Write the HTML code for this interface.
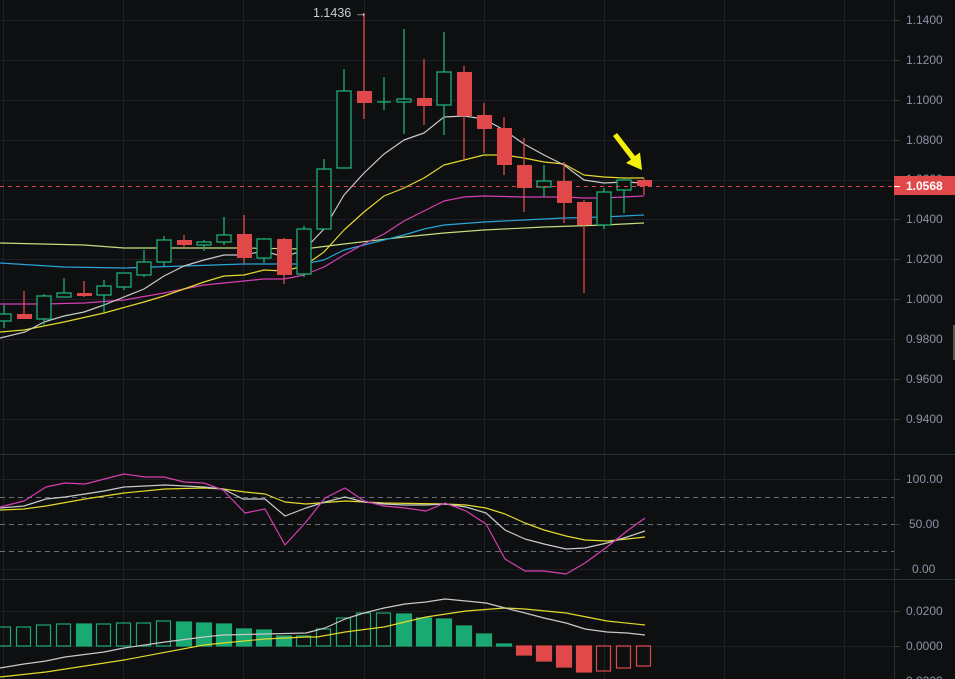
<!DOCTYPE html>
<html><head><meta charset="utf-8"><style>
html,body{margin:0;padding:0;background:#0e0f11;}
svg{display:block;font-family:"Liberation Sans",sans-serif;}
</style></head><body>
<svg width="955" height="679" viewBox="0 0 955 679" xmlns="http://www.w3.org/2000/svg">
<rect width="955" height="679" fill="#0e0f11"/>
<g stroke="#1e2025" stroke-width="1">
<line x1="0" y1="20.5" x2="894" y2="20.5"/><line x1="0" y1="60.5" x2="894" y2="60.5"/><line x1="0" y1="100.5" x2="894" y2="100.5"/><line x1="0" y1="140.5" x2="894" y2="140.5"/><line x1="0" y1="180.5" x2="894" y2="180.5"/><line x1="0" y1="219.5" x2="894" y2="219.5"/><line x1="0" y1="259.5" x2="894" y2="259.5"/><line x1="0" y1="299.5" x2="894" y2="299.5"/><line x1="0" y1="339.5" x2="894" y2="339.5"/><line x1="0" y1="379.5" x2="894" y2="379.5"/><line x1="0" y1="419.5" x2="894" y2="419.5"/>
<line x1="0" y1="479.5" x2="894" y2="479.5"/><line x1="0" y1="569.5" x2="894" y2="569.5"/>
<line x1="0" y1="611.5" x2="894" y2="611.5"/><line x1="0" y1="646.5" x2="894" y2="646.5"/>
<line x1="3.5" y1="0" x2="3.5" y2="679"/><line x1="123.5" y1="0" x2="123.5" y2="679"/><line x1="243.5" y1="0" x2="243.5" y2="679"/><line x1="364.5" y1="0" x2="364.5" y2="679"/><line x1="484.5" y1="0" x2="484.5" y2="679"/><line x1="604.5" y1="0" x2="604.5" y2="679"/><line x1="724.5" y1="0" x2="724.5" y2="679"/><line x1="844.5" y1="0" x2="844.5" y2="679"/>
</g>
<g stroke="#2a2d33" stroke-width="1">
<line x1="0" y1="454.5" x2="955" y2="454.5"/><line x1="0" y1="579.5" x2="955" y2="579.5"/><line x1="894.5" y1="0" x2="894.5" y2="679"/>
</g>
<g stroke="#3a3d44" stroke-width="1">
<line x1="894" y1="20.5" x2="900" y2="20.5"/><line x1="894" y1="60.5" x2="900" y2="60.5"/><line x1="894" y1="100.5" x2="900" y2="100.5"/><line x1="894" y1="140.5" x2="900" y2="140.5"/><line x1="894" y1="219.5" x2="900" y2="219.5"/><line x1="894" y1="259.5" x2="900" y2="259.5"/><line x1="894" y1="299.5" x2="900" y2="299.5"/><line x1="894" y1="379.5" x2="900" y2="379.5"/><line x1="894" y1="419.5" x2="900" y2="419.5"/><line x1="894" y1="479.5" x2="900" y2="479.5"/><line x1="894" y1="524.5" x2="900" y2="524.5"/><line x1="894" y1="569.5" x2="900" y2="569.5"/><line x1="894" y1="611.5" x2="900" y2="611.5"/><line x1="894" y1="646.5" x2="900" y2="646.5"/>
</g>
<g stroke="#6b6e75" stroke-width="1" stroke-dasharray="5,4">
<line x1="0" y1="497.5" x2="894" y2="497.5"/><line x1="0" y1="524.5" x2="894" y2="524.5"/><line x1="0" y1="551.5" x2="894" y2="551.5"/>
</g>
<g fill="none" stroke-width="1.2" stroke-linejoin="round">
<polyline stroke="#c5dd7f" points="0,243 84,245 124,248 244,248 304,249 344,244 404,237 444,233 484,230 544,227 604,225 644,223"/>
<polyline stroke="#2aa3d8" points="0,263 64,267 124,268 184,266 244,264 304,264 324,260 344,250 364,245 384,240 404,235 424,229 444,225 484,222 524,220 564,218 604,217 644,215"/>
<polyline stroke="#d63fb3" points="0,304 44,304 84,303 124,300 164,293 204,285 244,281 264,279 284,279 304,275 324,267 344,255 364,244 384,234 404,221 424,211 444,201 464,197 484,196 524,197 564,197 584,198 604,198 644,196"/>
<polyline stroke="#e2d92a" points="0,332 24,330 64,322 104,313 144,302 164,296 184,289 204,282 224,276 244,275 264,270 284,271 304,266 324,252 344,230 364,212 384,196 404,188 424,178 444,165 464,160 484,155 504,155 524,158 544,162 564,164 584,175 604,177 624,178 644,178"/>
<polyline stroke="#c9c9c9" points="0,338 25,332 44,322 64,316 84,312 104,305 144,289 164,276 184,266 204,260 224,255 244,255 264,251 284,257 304,250 324,229 344,195 364,173 384,154 404,140 424,133 444,117 464,116 484,119 504,130 524,144 544,155 564,165 584,180 604,183 624,182 644,183"/>
</g>
<g stroke="#1fae74" stroke-width="1.3" fill="#0e0f11">
<line x1="4" y1="305" x2="4" y2="328"/><rect x="-3" y="314" width="14" height="7"/>
<line x1="44" y1="294" x2="44" y2="325"/><rect x="37" y="296" width="14" height="23"/>
<line x1="64" y1="278" x2="64" y2="297"/><rect x="57" y="293" width="14" height="4"/>
<line x1="104" y1="280" x2="104" y2="312"/><rect x="97" y="286" width="14" height="9"/>
<line x1="124" y1="273" x2="124" y2="290"/><rect x="117" y="273" width="14" height="14"/>
<line x1="144" y1="250" x2="144" y2="277"/><rect x="137" y="262" width="14" height="13"/>
<line x1="164" y1="236" x2="164" y2="266"/><rect x="157" y="240" width="14" height="22"/>
<line x1="204" y1="240" x2="204" y2="251"/><rect x="197" y="242" width="14" height="3"/>
<line x1="224" y1="217" x2="224" y2="245"/><rect x="217" y="235" width="14" height="7"/>
<line x1="264" y1="238" x2="264" y2="263"/><rect x="257" y="239" width="14" height="19"/>
<line x1="304" y1="226" x2="304" y2="277"/><rect x="297" y="229" width="14" height="45"/>
<line x1="324" y1="159" x2="324" y2="229"/><rect x="317" y="169" width="14" height="60"/>
<line x1="344" y1="69" x2="344" y2="168"/><rect x="337" y="91" width="14" height="77"/>
<line x1="384" y1="77" x2="384" y2="110"/><line x1="377" y1="102" x2="391" y2="102"/>
<line x1="404" y1="29" x2="404" y2="134"/><rect x="397" y="99" width="14" height="3"/>
<line x1="444" y1="32" x2="444" y2="135"/><rect x="437" y="72" width="14" height="33"/>
<line x1="544" y1="165" x2="544" y2="197"/><rect x="537" y="181" width="14" height="6"/>
<line x1="604" y1="188" x2="604" y2="229"/><rect x="597" y="192" width="14" height="33"/>
<line x1="624" y1="179" x2="624" y2="213"/><rect x="617" y="180" width="14" height="10"/>
</g>
<g fill="#e0484a" stroke="#e0484a" stroke-width="1.3">
<line x1="24" y1="291" x2="24" y2="319"/><rect x="17" y="314" width="15" height="5" stroke="none"/>
<line x1="84" y1="281" x2="84" y2="297"/><rect x="77" y="293" width="15" height="3" stroke="none"/>
<line x1="184" y1="235" x2="184" y2="248"/><rect x="177" y="240" width="15" height="5" stroke="none"/>
<line x1="244" y1="215" x2="244" y2="263"/><rect x="237" y="234" width="15" height="24" stroke="none"/>
<line x1="284" y1="238" x2="284" y2="284"/><rect x="277" y="239" width="15" height="36" stroke="none"/>
<line x1="364" y1="13" x2="364" y2="119"/><rect x="357" y="91" width="15" height="12" stroke="none"/>
<line x1="424" y1="59" x2="424" y2="125"/><rect x="417" y="98" width="15" height="8" stroke="none"/>
<line x1="464" y1="66" x2="464" y2="161"/><rect x="457" y="72" width="15" height="44" stroke="none"/>
<line x1="484" y1="103" x2="484" y2="153"/><rect x="477" y="115" width="15" height="14" stroke="none"/>
<line x1="504" y1="117" x2="504" y2="175"/><rect x="497" y="128" width="15" height="37" stroke="none"/>
<line x1="524" y1="138" x2="524" y2="212"/><rect x="517" y="165" width="15" height="23" stroke="none"/>
<line x1="564" y1="162" x2="564" y2="223"/><rect x="557" y="181" width="15" height="22" stroke="none"/>
<line x1="584" y1="200" x2="584" y2="293"/><rect x="577" y="202" width="15" height="23" stroke="none"/>
<line x1="644" y1="178" x2="644" y2="195"/><rect x="637" y="180" width="15" height="6" stroke="none"/>
</g>
<line x1="0" y1="186.5" x2="894" y2="186.5" stroke="#e0484a" stroke-width="1" stroke-dasharray="4,4"/>
<polygon points="617,133 635,156 640,152.5 642,170 626,163 631,159.5 613,136" fill="#f5f20a"/>
<text x="313" y="17" font-size="12.5" fill="#c8ccd4">1.1436 →</text>
<g font-size="12" fill="#8b93a5">
<text x="906" y="24">1.1400</text><text x="906" y="64">1.1200</text><text x="906" y="104">1.1000</text><text x="906" y="144">1.0800</text><text x="906" y="183">1.0600</text><text x="906" y="223">1.0400</text><text x="906" y="263">1.0200</text><text x="906" y="303">1.0000</text><text x="906" y="343">0.9800</text><text x="906" y="383">0.9600</text><text x="906" y="423">0.9400</text>
<text x="906" y="483">100.00</text><text x="909" y="528">50.00</text><text x="912" y="573">0.00</text>
<text x="906" y="615">0.0200</text><text x="906" y="650">0.0000</text><text x="906" y="685">0.0200</text>
</g>
<rect x="894" y="176" width="61" height="19" fill="#e0484a"/>
<line x1="894" y1="186.5" x2="900" y2="186.5" stroke="#fff"/>
<text x="906" y="190" font-size="12" font-weight="bold" fill="#ffffff">1.0568</text>
<rect x="953" y="325" width="2" height="35" fill="#555"/>
<g fill="none" stroke-width="1.2" stroke-linejoin="round">
<polyline stroke="#e2d92a" points="0,510 24,509 46,506 85,499 124,493 165,489 204,488 223,489 245,492 265,494 285,502 306,504 345,501 384,503 445,504 466,505 486,508 505,514 525,523 544,530 566,536 585,540 607,541 627,539 645,537"/>
<polyline stroke="#c9c9c9" points="0,508 24,506 46,499 65,497 85,494 104,491 124,487 165,485 204,487 223,489 243,499 265,499 285,516 306,508 325,502 345,497 364,502 384,504 405,505 426,505 445,504 466,507 486,513 505,530 525,539 544,544 566,549 585,548 607,543 627,537 645,531"/>
<polyline stroke="#d63fb3" points="0,507 24,501 46,487 65,483 85,484 124,474 145,477 164,477 184,482 204,483 223,490 245,513 265,509 285,545 306,522 325,498 345,488 364,501 384,506 405,508 426,511 445,503 466,511 486,524 505,559 525,571 544,571 566,574 585,563 607,547 627,531 645,518"/>
</g>
<g fill="#1aa873" stroke="#1aa873" stroke-width="1.2">
<rect x="-3.5" y="627" width="14" height="19" fill="none"/>
<rect x="16.5" y="627" width="14" height="19" fill="none"/>
<rect x="36.5" y="625" width="14" height="21" fill="none"/>
<rect x="56.5" y="624" width="14" height="22" fill="none"/>
<rect x="76.5" y="624" width="15" height="22"/>
<rect x="96.5" y="624" width="14" height="22" fill="none"/>
<rect x="116.5" y="623" width="14" height="23" fill="none"/>
<rect x="136.5" y="623" width="14" height="23" fill="none"/>
<rect x="156.5" y="621" width="14" height="25" fill="none"/>
<rect x="176.5" y="622" width="15" height="24"/>
<rect x="196.5" y="623" width="15" height="23"/>
<rect x="216.5" y="624" width="15" height="22"/>
<rect x="236.5" y="629" width="15" height="17"/>
<rect x="256.5" y="630" width="15" height="16"/>
<rect x="276.5" y="636" width="15" height="10"/>
<rect x="296.5" y="636" width="14" height="10" fill="none"/>
<rect x="316.5" y="629" width="14" height="17" fill="none"/>
<rect x="336.5" y="618" width="14" height="28" fill="none"/>
<rect x="356.5" y="613" width="14" height="33" fill="none"/>
<rect x="376.5" y="613" width="14" height="33" fill="none"/>
<rect x="396.5" y="614" width="15" height="32"/>
<rect x="416.5" y="618" width="15" height="28"/>
<rect x="436.5" y="619" width="15" height="27"/>
<rect x="456.5" y="626" width="15" height="20"/>
<rect x="476.5" y="634" width="15" height="12"/>
<rect x="496.5" y="644" width="15" height="2"/>
</g>
<g fill="#e0484a" stroke="#e0484a" stroke-width="1.2">
<rect x="516.5" y="646" width="15" height="9"/>
<rect x="536.5" y="646" width="15" height="15"/>
<rect x="556.5" y="646" width="15" height="21"/>
<rect x="576.5" y="646" width="15" height="26"/>
<rect x="596.5" y="646" width="14" height="25" fill="none"/>
<rect x="616.5" y="646" width="14" height="22" fill="none"/>
<rect x="636.5" y="646" width="14" height="20" fill="none"/>
</g>
<g fill="none" stroke-width="1.2" stroke-linejoin="round">
<polyline stroke="#e2d92a" points="0,677 46,672 124,660 204,645 223,643 265,639 306,637 317,637 345,632 384,627 426,617 466,611 505,608 525,609 566,613 607,621 645,625"/>
<polyline stroke="#c9c9c9" points="0,668 24,664 46,661 65,657 104,652 124,648 165,642 204,637 223,635 265,634 306,633 325,628 345,619 364,613 384,608 405,604 426,602 445,599 466,601 486,603 505,608 525,613 544,618 566,623 585,629 607,632 627,633 645,635"/>
</g>
</svg>
</body></html>
